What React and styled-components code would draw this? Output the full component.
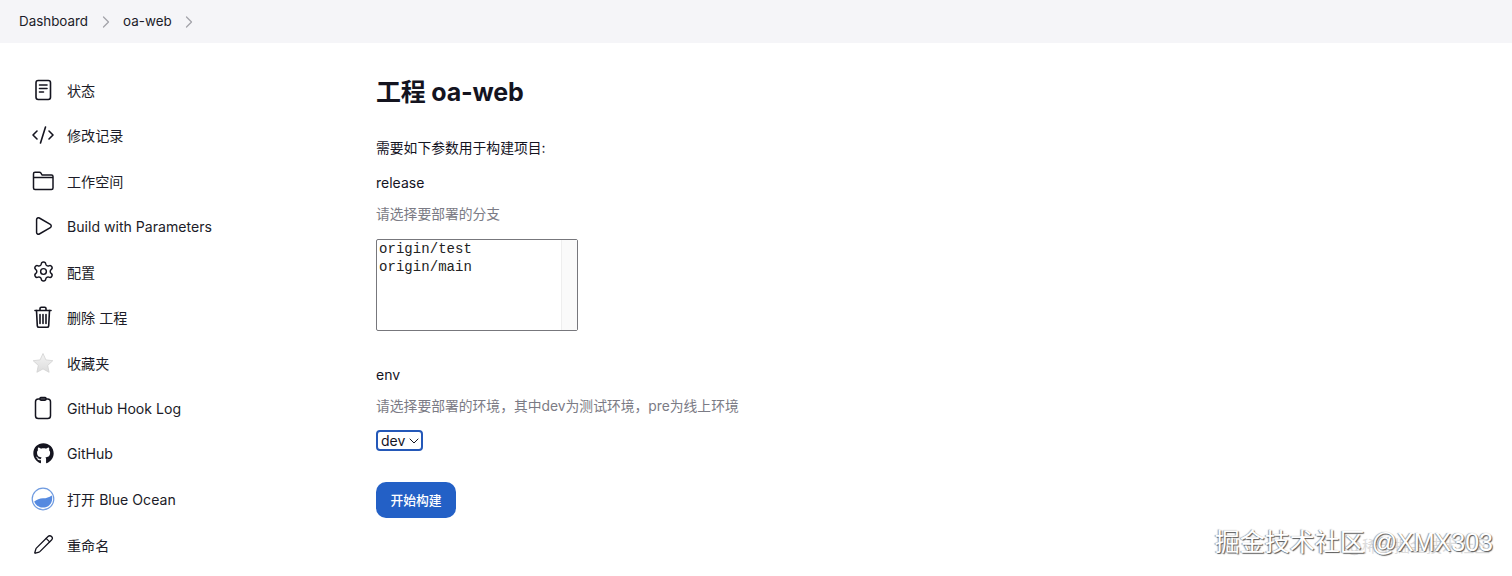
import React from 'react';
import styled, { createGlobalStyle } from 'styled-components';
import { FaGithub } from 'react-icons/fa';
import { ChevronRight, CodeXml, Play, Settings, Pencil } from 'lucide-react';

const Global = createGlobalStyle`
  html, body {
    margin: 0;
    background: #fff;
    overflow: hidden;
  }
  body {
    font-family: Inter, "Noto Sans CJK SC", sans-serif;
    color: #14141f;
  }
`;

const Page = styled.div`
  position: relative;
  width: 1512px;
  height: 576px;
  overflow: hidden;
`;

const Breadcrumbs = styled.nav`
  display: flex;
  align-items: center;
  height: 43px;
  padding-left: 19px;
  background: #f5f5f8;
  font-size: 13.4px;
  color: #1c1c28;
`;

const Crumb = styled.span`
  line-height: 43px;
`;

const Sep = styled.span`
  display: flex;
  width: 35px;
  justify-content: center;
  color: #a3a3aa;
`;

const Body = styled.div`
  display: flex;
`;

const Side = styled.aside`
  width: 376px;
  flex: none;
  padding: 24px 0 0 31px;
  box-sizing: border-box;
`;

const Item = styled.a`
  display: flex;
  align-items: center;
  height: 45.5px;
  font-size: 14.1px;
  color: #1c1c28;
`;

const Icon = styled.span`
  display: flex;
  width: 24px;
  justify-content: center;
  margin-right: 12px;
  color: #14141f;
`;

const Main = styled.main`
  padding-top: 30px;
`;

const Title = styled.h1`
  margin: 0;
  font-size: 25px;
  line-height: 38px;
  font-weight: 700;
  letter-spacing: -0.2px;
  color: #14141f;
`;

const Intro = styled.p`
  margin: 26px 0 0;
  font-size: 13.8px;
  line-height: 22px;
`;

const Label = styled.div`
  margin-top: ${p => p.$top}px;
  font-size: 14px;
  line-height: 20px;
  color: #14141f;
`;

const Hint = styled.div`
  margin-top: 10px;
  font-size: 13.8px;
  line-height: 22px;
  color: #7b7b85;
`;

const ListBox = styled.div`
  display: flex;
  box-sizing: border-box;
  width: 202px;
  height: 92px;
  margin-top: 14px;
  border: 1px solid #77777c;
  border-radius: 2px;
  background: #fff;
`;

const Options = styled.div`
  flex: 1;
  padding: 0 2px;
  font-family: "Liberation Mono", monospace;
  font-size: 14px;
  line-height: 18px;
  letter-spacing: 0.05px;
  color: #222;
`;

const Track = styled.div`
  width: 15px;
  background: #fafafa;
  border-left: 1px solid #eeeeee;
`;

const Select = styled.div`
  display: flex;
  align-items: center;
  justify-content: space-between;
  box-sizing: border-box;
  width: 47px;
  height: 21px;
  margin-top: 13px;
  padding: 0 2px 0 3px;
  border: 2px solid #2458b8;
  border-radius: 4px;
  font-size: 14px;
  color: #14141f;
`;

const Build = styled.button`
  display: block;
  width: 80px;
  height: 36px;
  margin-top: 31px;
  padding: 0 0 2px;
  border: none;
  border-radius: 10px;
  background: #2360c6;
  color: #fff;
  font-family: inherit;
  font-size: 12.8px;
  font-weight: 500;
`;

const Watermark = styled.div`
  position: absolute;
  right: 19px;
  bottom: 19px;
  font-family: "Liberation Sans", "Noto Sans CJK SC", sans-serif;
  font-size: 25px;
  line-height: 30px;
  color: #fff;
  text-shadow: 1px 1px 1px #555, -1px 0 1px #999;
  white-space: nowrap;
`;

const SubMark = styled.div`
  position: absolute;
  right: 22px;
  bottom: 19px;
  font-size: 16px;
  line-height: 22px;
  color: #dcdcdc;
  white-space: nowrap;
`;

function DocIcon() {
  return (
    <svg width="22" height="22" viewBox="0 0 22 22" fill="none" stroke="currentColor" strokeWidth="1.6" strokeLinecap="round">
      <rect x="4" y="1.5" width="14.5" height="19" rx="2.2" />
      <path d="M7.5 6h7.5M7.5 9.5h7.5M7.5 13h4" />
    </svg>
  );
}

function FolderIcon() {
  return (
    <svg width="24" height="22" viewBox="0 0 24 22" fill="none" stroke="currentColor" strokeWidth="1.5" strokeLinejoin="round">
      <path d="M2.500 5V3.800c0-.9.700-1.500 1.500-1.500h4.500c.7 0 1.100.3 1.500.8L11 5h9.500c1 0 1.500.600 1.500 1.500v11.500c0 .9-.6 1.500-1.500 1.500H4c-.9 0-1.500-.6-1.500-1.500z" />
      <path d="M2.500 7.500h19.500" />
    </svg>
  );
}

function TrashIcon() {
  return (
    <svg width="22" height="24" viewBox="0 0 22 24" fill="none" stroke="currentColor" strokeWidth="1.6" strokeLinecap="round" strokeLinejoin="round">
      <path d="M3 5.500h16" />
      <path d="M8 5.200V3.500c0-.8.500-1.300 1.300-1.300h3.400c.8 0 1.300.5 1.300 1.300v1.700" />
      <path d="M4.500 5.500l.8 15.300c.1 1 .7 1.500 1.600 1.500h8.200c.9 0 1.500-.5 1.600-1.500l.8-15.300" />
      <path d="M8 9.500v9M11 9.500v9M14 9.500v9" />
    </svg>
  );
}

function ClipIcon() {
  return (
    <svg width="22" height="24" viewBox="0 0 22 24" fill="none" stroke="currentColor" strokeWidth="1.5" strokeLinejoin="round">
      <rect x="3.500" y="3" width="15" height="19.500" rx="2.800" />
      <path d="M8 3V2.400c0-.5.300-.8.800-.8h4.400c.5 0 .8.300.8.800V3c0 .8-.4 1.200-1.200 1.200H9.200C8.400 4.200 8 3.800 8 3z" />
    </svg>
  );
}

function StarIcon() {
  return (
    <svg width="22" height="22" viewBox="0 0 22 22">
      <defs>
        <linearGradient id="star" x1="0" y1="0" x2="0" y2="1">
          <stop offset="0" stopColor="#f4f4f4" />
          <stop offset="1" stopColor="#dcdcdc" />
        </linearGradient>
      </defs>
      <path d="M11 1.500l2.900 6.400 6.900.8-5.100 4.700 1.400 6.900L11 16.900l-6.100 3.400 1.400-6.900L1.200 8.700l6.900-.8z" fill="url(#star)" stroke="#d2d2d2" strokeWidth="0.8" />
    </svg>
  );
}

function OceanIcon() {
  return (
    <svg width="24" height="24" viewBox="0 0 24 24">
      <circle cx="12" cy="12" r="10.800" fill="#fff" stroke="#6f9be0" strokeWidth="1.200" />
      <path d="M3.200 14.500C6 12.500 8.500 11.500 12 11.300c3.500-.2 6-1 8.800-2.900.5 1.600.6 4.300-.2 6.300C19.200 18.700 15.800 20.600 12 20.600c-4 0-7.500-2.500-8.800-6.100z" fill="#568ae0" />
    </svg>
  );
}

function SelectArrow() {
  return (
    <svg width="10" height="6" viewBox="0 0 10 6" fill="none" stroke="currentColor" strokeWidth="1" strokeLinecap="round">
      <path d="M1 1l4 4 4-4" />
    </svg>
  );
}

const items = [
  { label: '状态', icon: <DocIcon /> },
  { label: '修改记录', icon: <CodeXml size={24} strokeWidth={1.6} /> },
  { label: '工作空间', icon: <FolderIcon /> },
  { label: 'Build with Parameters', icon: <Play size={22} strokeWidth={1.6} /> },
  { label: '配置', icon: <Settings size={23} strokeWidth={1.5} /> },
  { label: '删除 工程', icon: <TrashIcon /> },
  { label: '收藏夹', icon: <StarIcon /> },
  { label: 'GitHub Hook Log', icon: <ClipIcon /> },
  { label: 'GitHub', icon: <FaGithub size={21} /> },
  { label: '打开 Blue Ocean', icon: <OceanIcon /> },
  { label: '重命名', icon: <Pencil size={21} strokeWidth={1.5} /> },
];

export default function App() {
  return (
    <Page>
      <Global />
      <Breadcrumbs>
        <Crumb>Dashboard</Crumb>
        <Sep><ChevronRight size={20} strokeWidth={1.5} /></Sep>
        <Crumb>oa-web</Crumb>
        <Sep><ChevronRight size={20} strokeWidth={1.5} /></Sep>
      </Breadcrumbs>
      <Body>
        <Side>
          {items.map(item => (
            <Item key={item.label}>
              <Icon>{item.icon}</Icon>
              {item.label}
            </Item>
          ))}
        </Side>
        <Main>
          <Title>工程 oa-web</Title>
          <Intro>需要如下参数用于构建项目:</Intro>
          <Label $top={14}>release</Label>
          <Hint>请选择要部署的分支</Hint>
          <ListBox>
            <Options>
              <div>origin/test</div>
              <div>origin/main</div>
            </Options>
            <Track />
          </ListBox>
          <Label $top={34}>env</Label>
          <Hint>请选择要部署的环境，其中dev为测试环境，pre为线上环境</Hint>
          <Select>dev<SelectArrow /></Select>
          <Build>开始构建</Build>
        </Main>
      </Body>
      <SubMark>@稀土掘金技术社区</SubMark>
      <Watermark>掘金技术社区 @XMX303</Watermark>
    </Page>
  );
}
